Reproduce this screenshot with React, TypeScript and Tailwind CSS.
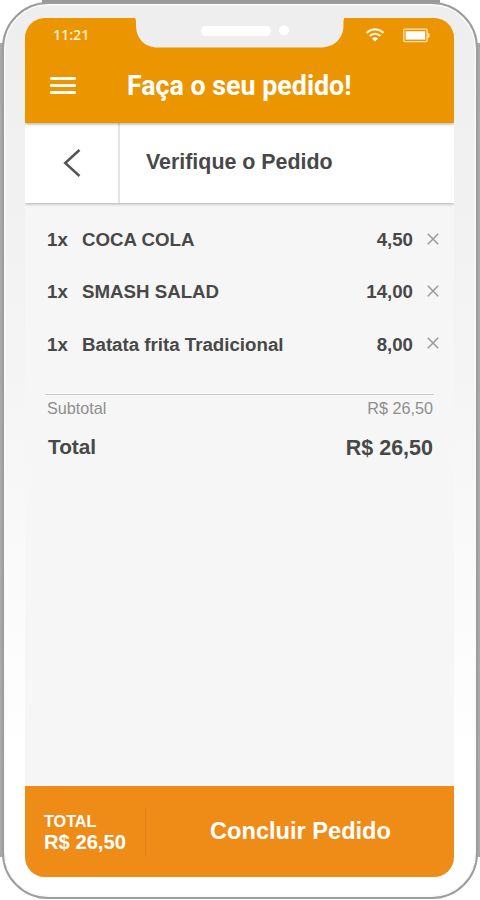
type Item = { qty: number; name: string; price: string };

const items: Item[] = [
  { qty: 1, name: "COCA COLA", price: "4,50" },
  { qty: 1, name: "SMASH SALAD", price: "14,00" },
  { qty: 1, name: "Batata frita Tradicional", price: "8,00" },
];

function Notch() {
  return (
    <svg
      className="absolute left-[110px] top-0"
      width="209"
      height="30"
      viewBox="0 0 209 30"
      aria-hidden
    >
      <path
        d="M-1 -1 V0 C1 0 1 2 1 7 C1 20 9 29.5 23 29.5 H185 C200 29.5 208.5 20 208.5 7 C208.5 2 208.5 0 211 0 V-1 Z"
        fill="#eeeeee"
      />
      <rect x="66" y="8" width="70" height="10" rx="5" fill="#fff" />
      <circle cx="149" cy="12.5" r="5" fill="#fff" />
    </svg>
  );
}

function WifiIcon() {
  return (
    <svg width="20" height="16" viewBox="0 0 20 16" fill="none" stroke="#fff3d8" strokeWidth="2.1" aria-hidden>
      <path d="M1.5 6 C6.5 1.1 13.5 1.1 18.5 6" />
      <path d="M4.7 9 C7.8 6 12.2 6 15.3 9" />
      <path d="M7 11.4 C8.8 9.7 11.2 9.7 13 11.4 L10 14.6 Z" fill="#fff" stroke="none" />
    </svg>
  );
}

function BatteryIcon() {
  return (
    <svg width="27" height="15" viewBox="0 0 27 15" fill="none" aria-hidden>
      <rect x="0.7" y="1.2" width="23.4" height="12.4" rx="1" stroke="#ffe3b0" strokeWidth="1.3" />
      <rect x="2.6" y="3.2" width="19.6" height="8.4" fill="#fff" />
      <path d="M24.5 4.2 L26.5 6 V8.8 L24.5 10.6 Z" fill="#ffe9c4" />
    </svg>
  );
}

function BackIcon() {
  return (
    <svg width="18" height="28" viewBox="0 0 18 28" fill="none" stroke="#555" strokeWidth="2.5" aria-hidden>
      <path d="M16.5 1 L2.2 14 L16.5 27" />
    </svg>
  );
}

function RemoveIcon() {
  return (
    <svg width="12" height="12" viewBox="0 0 12 12" fill="none" stroke="#9a9a9a" strokeWidth="1.5" aria-hidden>
      <path d="M0.8 0.8 L11.2 11.2 M11.2 0.8 L0.8 11.2" />
    </svg>
  );
}

function Header() {
  return (
    <header className="relative z-20 h-[105px] shrink-0 bg-[#eb9500] text-white shadow-[0_1px_3px_rgba(0,0,0,0.35)]">
      <Notch />
      <div className="flex h-[34px] items-center pl-[28px] pr-[24px]">
        <span className="pt-px font-['Open_Sans'] text-[14.2px] font-semibold leading-none text-[#ffeecb]">11:21</span>
        <span className="ml-auto flex items-center gap-[18px]">
          <WifiIcon />
          <BatteryIcon />
        </span>
      </div>
      <div className="flex h-[67px] items-center pl-[25px]">
        <button type="button" aria-label="Menu" className="flex w-[26px] flex-col gap-[4px]">
          <span className="h-[3px] rounded-[1px] bg-[#fffaf0]" />
          <span className="h-[3px] rounded-[1px] bg-[#fffaf0]" />
          <span className="h-[3px] rounded-[1px] bg-[#fffaf0]" />
        </button>
        <h1 className="ml-[51px] whitespace-nowrap pt-[2px] font-['Roboto'] text-[26.8px] font-bold">
          Faça o seu pedido!
        </h1>
      </div>
    </header>
  );
}

export default function App() {
  return (
    <div className="relative h-[900px] w-[480px] bg-white px-[2px] pb-px pt-[2px] font-['Liberation_Sans',sans-serif] text-[#484848]">
      {/* raised edges behind the rounded body */}
      <div className="absolute left-0 top-[43px] h-[814px] w-[4px] bg-[#a9a9a9]" />
      <div className="absolute right-0 top-[43px] h-[814px] w-[3px] bg-[#a9a9a9]" />
      <div className="absolute left-[42px] top-0 h-[3px] w-[398px] bg-[#999]" />

      <div className="relative h-full rounded-[46px] border-2 border-[#9b9d9f] bg-linear-to-b from-[#eeeeee] via-[#f4f4f4] via-40% to-white to-85% pb-[20px] pl-[21px] pr-[22px] pt-[14px] shadow-[inset_0_0_0_1.5px_#fafafa]">
        <main className="flex h-full w-[429px] flex-col overflow-hidden rounded-[20px] bg-[#f6f6f6]">
          <Header />

          <div className="relative z-10 flex h-[80px] shrink-0 items-stretch bg-white shadow-[0_1px_3px_rgba(0,0,0,0.3)]">
            <button type="button" aria-label="Voltar" className="grid w-[95px] place-items-center border-r-2 border-[#e4e4e4]">
              <BackIcon />
            </button>
            <h2 className="flex items-center pb-px pl-[26px] text-[21.4px] font-bold">Verifique o Pedido</h2>
          </div>

          <ul className="pl-[22px] pr-[15px] pt-[10px] text-[18.7px] font-bold">
            {items.map((item) => (
              <li key={item.name} className="flex h-[52.3px] items-center pt-[2px]">
                <span className="w-[35px]">{item.qty}x</span>
                <span>{item.name}</span>
                <span className="ml-auto mr-[14px]">{item.price}</span>
                <span className="pb-[3px]">
                  <RemoveIcon />
                </span>
              </li>
            ))}
          </ul>

          <div className="mx-[20px] mt-[24px] border-t border-[#cfcfcf] pr-px">
            <div className="flex justify-between pl-[2px] pt-px text-[16.2px] text-[#8e8e8e]">
              <span>Subtotal</span>
              <span>R$ 26,50</span>
            </div>
            <div className="mt-[11px] flex items-center justify-between pl-[3px] font-bold">
              <span className="pb-[2px] text-[20.8px]">Total</span>
              <span className="text-[21.5px]">R$ 26,50</span>
            </div>
          </div>

          <footer className="mt-auto flex h-[91px] shrink-0 items-center bg-[#ef8c18] font-bold text-white">
            <div className="flex h-[50px] w-[121px] flex-col justify-center border-r border-[#de8116] pl-[19px] pt-px">
              <span className="text-[16.2px] leading-[20px]">TOTAL</span>
              <span className="text-[20.2px] leading-[23px]">R$ 26,50</span>
            </div>
            <button type="button" className="flex-1 pl-px text-[23.6px]">
              Concluir Pedido
            </button>
          </footer>
        </main>
      </div>
    </div>
  );
}
